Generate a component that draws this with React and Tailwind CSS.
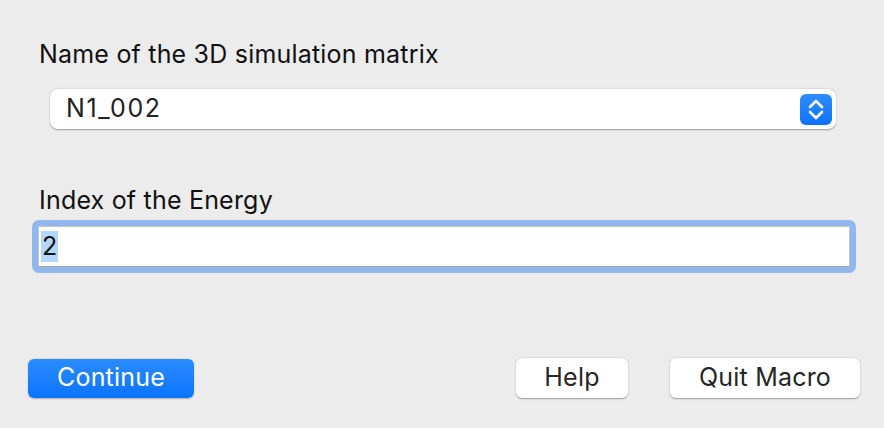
import React from "react";

const font = { fontFamily: "Inter, 'Liberation Sans', sans-serif" };

const Stepper = () => (
  <div className="w-[32px] h-[31px] rounded-[6px] bg-gradient-to-b from-[#2f8dff] to-[#0a72ff] flex items-center justify-center">
    <svg width="32" height="31" viewBox="0 0 32 31" fill="none">
      <path d="M10 13 L16 7 L22 13" stroke="white" strokeWidth="2.6" strokeLinecap="round" strokeLinejoin="round" />
      <path d="M10 18 L16 24 L22 18" stroke="white" strokeWidth="2.6" strokeLinecap="round" strokeLinejoin="round" />
    </svg>
  </div>
);

const App = () => {
  return (
    <div className="w-[884px] h-[428px] bg-[#ececec] flex flex-col text-[#111]" style={font}>
      {/* Matrix name */}
      <div className="pl-[39px] pt-[39px] text-[25px] leading-[30px] tracking-[0.2px]">Name of the 3D simulation matrix</div>
      <div className="ml-[50px] mt-[20px] w-[786px] h-[40px] bg-white rounded-[8px] shadow-[0_0.5px_1.5px_rgba(0,0,0,0.35)] flex items-center justify-between pl-[16px] pr-[4px]">
        <span className="text-[25px] text-[#222] tracking-[1.6px]">N1_002</span>
        <Stepper />
      </div>

      {/* Energy index */}
      <div className="pl-[39px] mt-[56px] text-[25px] leading-[30px] tracking-[0.2px]">Index of the Energy</div>
      <div className="ml-[32px] mt-[5px] w-[824px] h-[53px] rounded-[7px] bg-[#90b8ef] p-[6px]">
        <div className="h-full bg-white border border-[#c6c6c6] border-b-[#a9a9a9] flex items-center pl-[2px]">
          <span className="bg-[#b3d7ff] text-[25px] leading-[31px] px-[1px] text-[#111]">2</span>
        </div>
      </div>

      {/* Buttons */}
      <div className="mt-auto mb-[30px] flex items-center justify-between pl-[28px] pr-[24px]">
        <button className="w-[166px] h-[39px] rounded-[6px] bg-gradient-to-b from-[#2a8cff] to-[#0a73ff] text-white text-[25px] tracking-[0.2px] shadow-[0_0.5px_1.5px_rgba(0,0,0,0.25)]">
          Continue
        </button>
        <div className="flex gap-[42px]">
          <button className="w-[112px] h-[40px] rounded-[6px] bg-white text-[#262626] text-[25px] tracking-[0.2px] shadow-[0_0.5px_1.5px_rgba(0,0,0,0.35)]">
            Help
          </button>
          <button className="w-[190px] h-[40px] rounded-[6px] bg-white text-[#262626] text-[25px] tracking-[0.2px] shadow-[0_0.5px_1.5px_rgba(0,0,0,0.35)]">
            Quit Macro
          </button>
        </div>
      </div>
    </div>
  );
};

export default App;
